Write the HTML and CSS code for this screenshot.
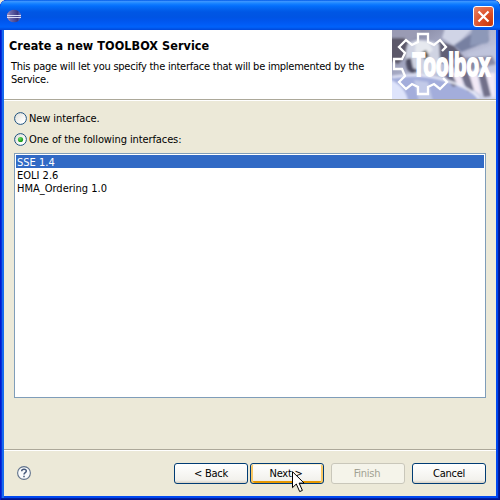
FILE: index.html
```html
<!DOCTYPE html>
<html lang="en">
<head>
<meta charset="utf-8">
<title>Create a new TOOLBOX Service</title>
<link rel="stylesheet" href="styles.css">
</head>
<body>
<div class="window">
  <div class="titlebar">
    <svg class="app-icon" width="16" height="16" viewBox="0 0 16 16">
      <defs><linearGradient id="orb" x1="0" x2="1"><stop offset="0" stop-color="#b995b5"/><stop offset=".25" stop-color="#6967aa"/><stop offset=".75" stop-color="#3b3984"/><stop offset="1" stop-color="#6673c7"/></linearGradient></defs>
      <ellipse cx="8" cy="8" rx="7" ry="6.3" fill="url(#orb)"/>
      <path d="M1 7.5h14M1 9.5h14" stroke="#d9dcf6"/>
    </svg>
    <div class="close"><svg width="21" height="21" viewBox="0 0 21 21"><path d="M5.5 5.5l10 10M15.5 5.5l-10 10" stroke="#fff" stroke-width="2.2"/></svg></div>
  </div>
  <div class="content">
    <div class="header">
      <div class="heading">
        <h1><span class="t-title">Create a new TOOLBOX Service</span></h1>
        <p><span class="t-desc">This page will let you specify the interface that will be implemented by the</span><br><span class="t-desc">Service.</span></p>
      </div>
      <svg class="banner" width="104" height="69" viewBox="0 0 104 69">
        <defs>
          <linearGradient id="sky" x1="0" y1="0" x2="1" y2="1"><stop offset="0" stop-color="#777994"/><stop offset=".4" stop-color="#aeb2cc"/><stop offset="1" stop-color="#d5d9ee"/></linearGradient>
          <filter id="soft" x="-20%" y="-20%" width="140%" height="140%"><feGaussianBlur stdDeviation="1.3"/></filter>
        </defs>
        <rect width="104" height="69" fill="url(#sky)"/>
        <g filter="url(#soft)">
          <path d="M-3-3h31v8L14 14-3 19z" fill="#9a9bb4"/>
          <path d="M-3 8l15 0 8 8-5 9L6 34-3 30z" fill="#5c5969"/>
          <path d="M16 13q15-8 34 3v25q-16 8-32 0-8-11-2-28z" fill="#cfd3e2"/>
          <path d="M24 10l12 2 5 8-8 6-10-4z" fill="#e6e9ef"/>
          <path d="M14 29q-1 12 6 14l8-2-7-3-2-10z" fill="#4c4b61"/>
          <path d="M29 23l5-3 3 6-4 4z" fill="#58584f"/>
          <path d="M47 11l15 5 13 15-9 8-18-7z" fill="#605f74"/>
          <path d="M53-2h28L63 16 50 8z" fill="#d0d4e6"/>
          <path d="M62 15L84 1h12l1 10-28 11z" fill="#7780a1"/>
          <path d="M80-2h17l-1 15-18 3z" fill="#8d98b8"/>
          <path d="M75 23l32-9v18l-28 6z" fill="#bfc4dc"/>
          <path d="M56 29l44-3 4 8-36 9z" fill="#8a8ba4"/>
          <path d="M-3 46q30-5 58 4 26 7 35 22H-3z" fill="#a3addb"/>
          <path d="M-3 49q17 7 19 23H-3z" fill="#dee4fb"/>
          <path d="M22 50l14 2 5 20H27z" fill="#c2cae8"/>
          <path d="M51 43l8-1 7 13-5 2zM68 43l8-2 6 19-6 2zM86 43l7-1 6 24-7 1z" fill="#716f89"/>
          <path d="M60 43l8-1 4 16-6-2zM77 43l8-1 4 23-7-5zM94 43h9v24h-3z" fill="#f2e9f6"/>
          <path d="M0 47q30-5 56 4 25 8 31 18" fill="none" stroke="#eef0fc" stroke-width="2"/>
        </g>
        <path d="M50 21l4-4-6-7-6 5-6-3V4H26v8l-6 3-6-5-7 7 6 6-3 6H2v10h8l3 7-6 6 7 7 6-5 6 3v7h10v-7l6-3 6 5 7-7-4-4" fill="none" stroke="#fff" stroke-width="2.3"/>
        <text class="banner-text" transform="translate(20.5 46.3) scale(.6 1)">Toolbox</text>
      </svg>
    </div>
    <div class="page">
      <div class="option"><svg width="13" height="13" viewBox="0 0 13 13"><defs><linearGradient id="well" x1="0" y1="0" x2="1" y2="1"><stop offset="0" stop-color="#dcdcd4"/><stop offset=".75" stop-color="#fff"/></linearGradient></defs><circle cx="6.5" cy="6.5" r="5.9" fill="url(#well)" stroke="#1f527f"/></svg><span class="t-opt">New interface.</span></div>
      <div class="option"><svg width="13" height="13" viewBox="0 0 13 13"><defs><radialGradient id="dot" cx=".35" cy=".3" r=".7"><stop offset="0" stop-color="#68da66"/><stop offset="1" stop-color="#159614"/></radialGradient></defs><circle cx="6.5" cy="6.5" r="5.9" fill="url(#well)" stroke="#1f527f"/><circle cx="6.5" cy="6.5" r="2.6" fill="url(#dot)"/></svg><span class="t-opt">One of the following interfaces:</span></div>
      <div class="list">
        <div class="row selected">SSE 1.4</div>
        <div class="row">EOLI 2.6</div>
        <div class="row">HMA_Ordering 1.0</div>
      </div>
    </div>
    <div class="footer">
      <svg class="help" width="14" height="14" viewBox="0 0 14 14"><circle cx="7" cy="7" r="6.4" fill="#f8fafc" stroke="#60728b" stroke-width="1.1"/><path d="M4.7 5.2C4.7 2.5 9.3 2.5 9.3 5c0 1.7-2.3 1.6-2.3 3.5M7 9.8v1.5" fill="none" stroke="#45587a" stroke-width="1.5"/></svg>
      <div class="button back"><span>&lt; Back</span></div>
      <div class="button next"><span>Next &gt;</span>
        <svg class="cursor" width="13" height="22" viewBox="0 0 13 22"><path d="M.5.7v16l3.8-3.7 3.4 7.6 2.7-1.2-3.3-7.3h5z" fill="#fff" stroke="#000"/></svg>
      </div>
      <div class="button finish"><span>Finish</span></div>
      <div class="button cancel"><span>Cancel</span></div>
    </div>
  </div>
</div>
</body>
</html>
```
FILE: styles.css
```css
* { box-sizing: border-box; }
body {
  margin: 0;
  background: #ece9d8;
  font: 11px/13px "DejaVu Sans Condensed", "DejaVu Sans", sans-serif;
  font-stretch: condensed;
  color: #000;
}
.window {
  width: 500px;
  height: 500px;
  display: flex;
  flex-direction: column;
  padding: 0 4px 4px;
  border-radius: 7px 7px 0 0;
  overflow: hidden;
  background: #0831d9;
  box-shadow: inset 1px 0 #0019cf, inset -1px -1px #00138c, inset -2px -2px #001ea0, inset 2px 0 #0831d9, inset 4px 0 #166aee, inset -4px -4px #0048f1;
}
.titlebar {
  height: 30px;
  flex: none;
  display: flex;
  justify-content: space-between;
  margin: 0 -4px;
  padding: 6px 6px 0;
  background: linear-gradient(#0058e6 0, #3a93ff 1.5px, #288eff 2.5px, #127dff 4px, #036ffc 6px, #0262ee 9px, #0057e5 12px, #0054e3 17px, #0055eb 20px, #005bf5 24px, #0062fb 27px, #0048d9 30px);
}
.app-icon { margin-top: 2px; }
.close {
  width: 21px;
  height: 21px;
  border: 1px solid #fff;
  border-radius: 3px;
  background: radial-gradient(circle at 85% 90%, #c93a0d 0, #dc4e27 45%, #e98668 100%);
}
.close svg { display: block; margin: -1px; }
.content { flex: 1; display: flex; flex-direction: column; background: #ece9d8; }
.header {
  height: 70px;
  flex: none;
  display: flex;
  justify-content: space-between;
  background: #fff;
  border-bottom: 1px solid #aca899;
}
.heading { width: 388px; padding: 8px 0 0 5px; }
h1 { margin: 0; font-size: 12.5px; line-height: 15px; font-weight: bold; white-space: nowrap; }
.t-title { letter-spacing: .07px; }
p { margin: 7px 0 0 2px; white-space: nowrap; }
.t-desc { letter-spacing: -.24px; }
.banner { display: block; flex: none; }
.banner-text { font: bold 34px "Liberation Sans", sans-serif; fill: #fff; stroke: #fff; stroke-width: 1.7px; vector-effect: non-scaling-stroke; }
.page {
  height: 349px;
  flex: none;
  padding: 10px 10px 0;
  border-top: 1px solid #fff;
}
.option { height: 15px; display: flex; align-items: center; gap: 2px; margin-bottom: 6px; }
.t-opt { letter-spacing: -.1px; }
.list { height: 245px; padding: 1px; border: 1px solid #7f9db9; background: #fff; }
.row { height: 13px; padding: 1px 0 0 1px; }
.selected { background: #316ac5; color: #fff; }
.footer {
  flex: 1;
  display: flex;
  align-items: flex-start;
  padding: 13px 10px 0 13px;
  border-top: 1px solid #aca899;
  box-shadow: inset 0 1px #fff;
}
.help { margin-top: 3px; margin-right: auto; }
.button {
  position: relative;
  width: 74px;
  height: 21px;
  display: flex;
  align-items: center;
  justify-content: center;
  border: 1px solid #003c74;
  border-radius: 3px;
  background: linear-gradient(#fff, #f2f1ec 85%, #d8d1c4);
  letter-spacing: -.25px;
}
.next { margin-left: 2px; box-shadow: inset 0 1px #fff0cf, inset 2px 0 #f9c864, inset -2px 0 #f9c864, inset 0 -2px #e59700; }
.next span { margin-right: 2px; }
.finish { margin-left: 7px; border-color: #c9c7ba; background: #f5f4ea; color: #a1a192; }
.finish span { margin-right: 2px; }
.cancel { margin-left: 7px; }
.cursor { position: absolute; left: 41px; top: 7px; z-index: 1; }
```
